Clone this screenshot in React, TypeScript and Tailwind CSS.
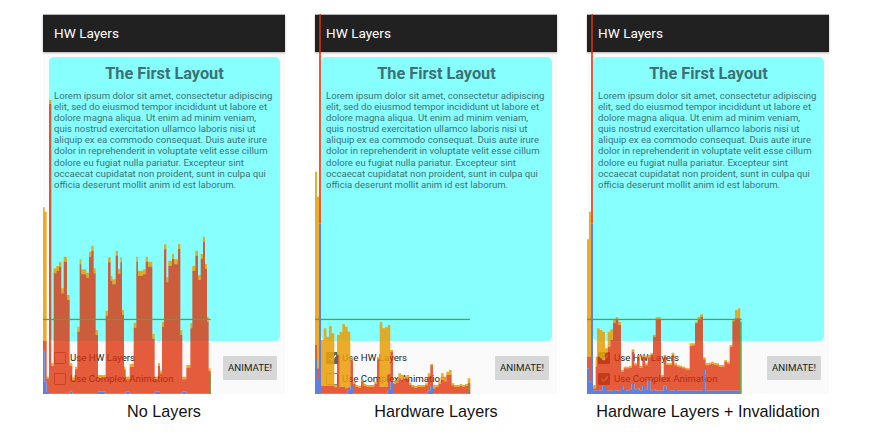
const ORANGE = "#e99f0b";
const RED = "#de2f06";
const BLUE = "#5b82e0";
const GREEN = "#55a53c";

type Bar = { x: number; w: number; o: number; r: number; b: number };

const LOREM =
  "Lorem ipsum dolor sit amet, consectetur adipiscing elit, sed do eiusmod tempor incididunt ut labore et dolore magna aliqua. Ut enim ad minim veniam, quis nostrud exercitation ullamco laboris nisi ut aliquip ex ea commodo consequat. Duis aute irure dolor in reprehenderit in voluptate velit esse cillum dolore eu fugiat nulla pariatur. Excepteur sint occaecat cupidatat non proident, sunt in culpa qui officia deserunt mollit anim id est laborum.";

// [x end, orange top] in 3x reference coordinates
const steps1: [number, number][] = [
  [72, 490], [80, 205], [88, 198], [95, 185], [102, 265], [112, 170], [120, 285], [128, 490], [136, 532], [143, 500],
  [150, 380], [155, 178], [170, 208], [178, 218], [185, 155], [192, 137], [198, 205], [205, 390], [228, 525], [235, 332],
  [243, 172], [248, 228], [258, 238], [265, 152], [272, 207], [277, 172], [283, 330], [288, 500], [300, 530], [312, 492],
  [320, 368], [325, 170], [340, 212], [348, 208], [355, 170], [368, 185], [375, 402], [385, 530], [391, 490], [397, 512],
  [403, 365], [410, 133], [416, 232], [427, 182], [433, 162], [445, 178], [452, 132], [458, 390], [470, 530], [482, 495],
  [488, 370], [497, 198], [505, 152], [513, 225], [520, 162], [526, 110], [532, 192], [537, 350], [543, 505],
];

const bars1: Bar[] = [
  { x: 40, w: 5, o: 22, r: 423, b: 455 },
  { x: 45, w: 6, o: 35, r: 423, b: 545 },
  { x: 51, w: 7, o: 530, r: 536, b: 576 },
  { x: 58, w: 7, o: -300, r: -288, b: 581 },
  ...steps1.map(([end, t], i) => {
    const x = i === 0 ? 65 : steps1[i - 1][0];
    const bump = [120, 205, 290, 378, 462].some((c) => x > c - 6 && x < c + 8);
    return { x, w: end - x, o: t, r: t + (t > 480 ? 8 : 15), b: bump ? 575 : 581 };
  }),
];

const rows2: [number, number, number, number][] = [
  [48, 420, 558, 580], [56, 385, 558, 580], [64, 410, 558, 580], [72, 378, 558, 580], [80, 400, 558, 580],
  [88, 555, 562, 580], [96, 405, 465, 580], [104, 395, 560, 580], [112, 372, 560, 580], [120, 380, 565, 580],
  [128, 395, 562, 570], [136, 478, 482, 555], [144, 545, 552, 580], [152, 555, 561, 580], [160, 557, 563, 580],
  [168, 538, 545, 580], [176, 552, 558, 580], [184, 555, 561, 580], [192, 555, 561, 580], [200, 555, 561, 580],
  [208, 545, 552, 580], [216, 472, 478, 580], [224, 367, 560, 580], [232, 385, 560, 580], [240, 382, 560, 580],
  [248, 375, 522, 570], [256, 450, 456, 545], [264, 545, 552, 580], [272, 540, 548, 580], [280, 520, 535, 580],
  [288, 525, 540, 580], [296, 530, 536, 580], [304, 525, 535, 580], [312, 548, 555, 580], [320, 555, 560, 580],
  [328, 558, 564, 580], [336, 555, 561, 580], [344, 555, 561, 580], [352, 555, 561, 580], [360, 550, 556, 580],
  [368, 520, 530, 572], [376, 492, 496, 558], [384, 555, 565, 580], [392, 555, 561, 580], [400, 545, 552, 580],
  [408, 520, 540, 580], [416, 530, 545, 580], [424, 515, 525, 580], [432, 510, 525, 580], [440, 550, 556, 580],
  [448, 555, 561, 580], [456, 555, 561, 580], [464, 552, 558, 580], [472, 555, 561, 580], [480, 552, 558, 580],
  [488, 535, 550, 580],
];

const bars2: Bar[] = [
  { x: 30, w: 6, o: -85, r: 435, b: 480 },
  { x: 36, w: 6, o: -10, r: 505, b: 540 },
  { x: 42, w: 6, o: -558, r: -558, b: 70 },
  ...rows2.map(([x, o, r, b]) => ({ x, w: 8, o, r, b })),
];

const rows3: [number, number, number, number][] = [
  [54, 555, 565, 572], [62, 470, 500, 572], [66, 385, 470, 570], [74, 390, 475, 572], [82, 395, 480, 555],
  [90, 445, 460, 570], [98, 395, 440, 572], [106, 388, 420, 572], [114, 360, 368, 570], [122, 352, 358, 572],
  [130, 365, 375, 572], [138, 510, 515, 558], [146, 500, 505, 570], [154, 500, 505, 572], [162, 498, 503, 568],
  [170, 448, 455, 552], [178, 490, 496, 568], [186, 465, 472, 565], [194, 498, 504, 572], [202, 465, 472, 558],
  [210, 490, 496, 568], [218, 465, 472, 542], [226, 460, 466, 572], [234, 405, 410, 568], [242, 352, 358, 572],
  [250, 352, 358, 572], [258, 525, 530, 572], [266, 465, 470, 557], [274, 490, 495, 570], [282, 490, 495, 572],
  [290, 458, 464, 572], [298, 490, 496, 570], [306, 495, 500, 572], [314, 497, 502, 572], [322, 500, 505, 572],
  [330, 503, 508, 572], [338, 505, 510, 572], [344, 430, 438, 572], [352, 430, 436, 572], [360, 365, 370, 572],
  [368, 350, 358, 572], [376, 343, 350, 572], [384, 472, 478, 510], [392, 490, 496, 572], [400, 488, 494, 572],
  [408, 485, 491, 572], [416, 488, 494, 572], [424, 490, 496, 572], [432, 495, 500, 572], [440, 495, 500, 572],
  [448, 480, 486, 572], [456, 485, 491, 572], [464, 435, 440, 572], [472, 358, 364, 572], [480, 330, 355, 572],
  [488, 325, 355, 572],
];

const bars3: Bar[] = [
  { x: 36, w: 6, o: 118, r: 470, b: 505 },
  { x: 42, w: 6, o: 35, r: 470, b: 545 },
  { x: 48, w: 6, o: -558, r: -558, b: 70 },
  ...rows3.map(([x, o, r, b], i) => ({ x, w: i < rows3.length - 1 ? rows3[i + 1][0] - x : 8, o, r, b })),
];

function Chart({ bars, left, end, tail }: { bars: Bar[]; left: number; end: number; tail: number }) {
  const X = (z: number) => ((z - left) / 3).toFixed(2);
  const Y = (z: number) => Math.max(186 + z / 3, 0).toFixed(2);
  const box = (x: number, w: number, a: number, b: number) =>
    `M${X(x)} ${Y(a)}H${X(x + w)}V${Y(b)}H${X(x)}Z`;
  let orange = "";
  let red = "";
  let blue = "";
  for (const s of bars) {
    if (s.r > s.o) orange += box(s.x, s.w, s.o, s.r);
    if (s.b > s.r) red += box(s.x, s.w, s.r, s.b);
    blue += box(s.x, s.w, s.b, 582);
  }
  return (
    <svg className="absolute left-0 top-0 pointer-events-none" width={242} height={380} viewBox="0 0 242 380">
      <path d={orange} fill={ORANGE} fillOpacity={0.88} />
      <path d={red} fill={RED} fillOpacity={0.78} />
      <path d={blue} fill={BLUE} />
      <rect x={0} y={304.8} width={(end - left) / 3} height={1.3} fill={GREEN} />
      <rect x={(end - left) / 3 - 1.5} y={186 + tail / 3} width={1.5} height={194 - tail / 3} fill={GREEN} />
    </svg>
  );
}

function Check({ checked, label }: { checked: boolean; label: string }) {
  return (
    <div className="flex items-center gap-[4px]">
      <span className={`flex h-[12px] w-[12px] items-center justify-center rounded-[1px] border-[1.5px] ${checked ? "border-[#56695f] bg-[#56695f]" : "border-[#8a8a8a]"}`}>
        {checked && (
          <svg width="9" height="9" viewBox="0 0 12 12" fill="none" stroke="#fafafa" strokeWidth="1.6">
            <path d="M2 6.5 L5 9.5 L10.5 3" />
          </svg>
        )}
      </span>
      <span className="text-[9.7px] leading-[12px] text-[#1c1c1c] font-['Roboto',sans-serif]">{label}</span>
    </div>
  );
}

function Phone({ caption, bars, left, end, tail, c1, c2 }: { caption: string; bars: Bar[]; left: number; end: number; tail: number; c1: boolean; c2: boolean }) {
  return (
    <div className="flex w-[242px] flex-col items-center">
      <div className="relative flex h-[380px] w-[242px] flex-col bg-[#fafafa] font-['Roboto',sans-serif]">
        <div className="flex h-[38px] items-center border-t border-[#b5b5b5] bg-[#212121] pl-[11px] text-[13.6px] text-white shadow-[0_1px_2px_rgba(0,0,0,0.3)]">
          HW Layers
        </div>
        <div className="ml-[6px] mr-[5px] mt-[5px] h-[284px] rounded-[5px] bg-[#88ffff] px-[5px] pt-[6px] text-[#3c7274]">
          <h2 className="text-center text-[16.3px] font-bold leading-[21px]">The First Layout</h2>
          <p className="mt-[6px] text-[9.6px] leading-[11.1px]">{LOREM}</p>
        </div>
        <div className="flex flex-1 items-center justify-between pl-[11px] pr-[8px] pt-[1px]">
          <div className="flex flex-col gap-[9px]">
            <Check checked={c1} label="Use HW Layers" />
            <Check checked={c2} label="Use Complex Animation" />
          </div>
          <button className="h-[24px] w-[54px] rounded-[1px] bg-[#d6d7d7] text-[9.7px] font-normal text-[#222]">ANIMATE!</button>
        </div>
        <Chart bars={bars} left={left} end={end} tail={tail} />
      </div>
      <div className="mt-[8px] text-[16.2px] leading-[18px] text-[#111] font-['Liberation_Sans',sans-serif] whitespace-nowrap">{caption}</div>
    </div>
  );
}

export default function App() {
  return (
    <div className="flex h-[433px] w-[871px] gap-[30px] overflow-hidden bg-white pl-[43px] pt-[14px]">
      <Phone caption="No Layers" bars={bars1} left={40} end={543} tail={520} c1={false} c2={false} />
      <Phone caption="Hardware Layers" bars={bars2} left={30} end={495} tail={550} c1={true} c2={false} />
      <Phone caption="Hardware Layers + Invalidation" bars={bars3} left={36} end={500} tail={365} c1={true} c2={true} />
    </div>
  );
}
